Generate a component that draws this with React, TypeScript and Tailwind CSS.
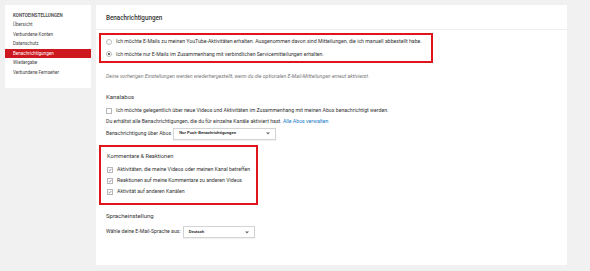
import React from "react";

const font = { fontFamily: "Roboto, 'Liberation Sans', sans-serif" };

const Radio = ({ checked }: { checked?: boolean }) => (
  <span className="w-[6px] h-[6px] rounded-full border border-[#bdbdbd] bg-white flex items-center justify-center shrink-0">
    {checked && <span className="w-[2px] h-[2px] rounded-full bg-[#333]" />}
  </span>
);

const Check = ({ checked }: { checked?: boolean }) => (
  <span className="w-[6px] h-[6px] border border-[#b8b8b8] bg-white flex items-center justify-center shrink-0">
    {checked && (
      <svg width="6" height="6" viewBox="0 0 6 6">
        <path d="M1 3.2 L2.4 4.5 L5 1.2" fill="none" stroke="#3b5478" strokeWidth="0.9" />
      </svg>
    )}
  </span>
);

const Select = ({ label, w }: { label: string; w: string }) => (
  <div className={`${w} h-[12px] border border-[#d3d3d3] bg-white flex items-center justify-between px-[5px] shadow-[0_1px_1px_rgba(0,0,0,0.05)]`}>
    <span className="text-[4.2px] font-bold text-[#333]">{label}</span>
    <svg width="4" height="3" viewBox="0 0 4 3">
      <path d="M0 0.5 L4 0.5 L2 2.5 Z" fill="#666" />
    </svg>
  </div>
);

const navItems = [
  "Übersicht",
  "Verbundene Konten",
  "Datenschutz",
  "Benachrichtigungen",
  "Wiedergabe",
  "Verbundene Fernseher",
];

export default function App() {
  return (
    <div style={font} className="w-[590px] h-[271px] bg-[#f1f1f1] flex items-start pt-[5px] pl-[5px] gap-[5px] text-[#333] overflow-hidden">
      <div className="w-[86px] h-[83px] bg-white pt-[6px] flex flex-col">
        <div className="h-[9px] pl-[8px] text-[4.5px] font-bold text-[#555] leading-[9px]">KONTOEINSTELLUNGEN</div>
        {navItems.map((item) => (
          <div
            key={item}
            className={`h-[9.6px] pl-[8px] text-[4.6px] leading-[9.6px] ${
              item === "Benachrichtigungen" ? "bg-[#cc181e] text-white" : "text-[#444]"
            }`}
          >
            {item}
          </div>
        ))}
      </div>

      <div className="w-[471px] h-[260px] bg-white flex flex-col">
        <div className="h-[25px] border-b border-[#efefef] flex items-center pl-[10px] pt-[3px] text-[6.3px] font-medium text-[#333]">
          Benachrichtigungen
        </div>

        <div className="pl-[3px] pt-[3px] flex flex-col text-[5.2px]">
          <div className="w-[334px] h-[30px] border-2 border-[#e0141b] pl-[5px] flex flex-col justify-center gap-[5px]">
            <div className="flex items-center gap-[4px]">
              <Radio />
              <span>Ich möchte E-Mails zu meinen YouTube-Aktivitäten erhalten. Ausgenommen davon sind Mitteilungen, die ich manuell abbestellt habe.</span>
            </div>
            <div className="flex items-center gap-[4px]">
              <Radio checked />
              <span>Ich möchte nur E-Mails im Zusammenhang mit verbindlichen Servicemitteilungen erhalten.</span>
            </div>
          </div>

          <div className="pl-[7px] h-[24px] pt-[3px] flex items-center italic text-[#767676]">
            Deine vorherigen Einstellungen werden wiederhergestellt, wenn du die optionalen E-Mail-Mitteilungen erneut aktivierst.
          </div>

          <div className="pl-[7px] h-[16px] pt-[3px] flex items-center text-[6px] text-[#333]">Kanalabos</div>

          <div className="pl-[7px] h-[13px] flex items-center gap-[4px] mt-[1px]">
            <Check />
            <span>Ich möchte gelegentlich über neue Videos und Aktivitäten im Zusammenhang mit meinen Abos benachrichtigt werden.</span>
          </div>
          <div className="pl-[7px] h-[10px] flex items-center">
            Du erhältst alle Benachrichtigungen, die du für einzelne Kanäle aktiviert hast.&nbsp;
            <span className="text-[#167ac6]">Alle Abos verwalten</span>
          </div>
          <div className="pl-[7px] h-[13px] flex items-center gap-[2px]">
            <span>Benachrichtigung über Abos</span>
            <Select label="Nur Push-Benachrichtigungen" w="w-[103px]" />
          </div>

          <div className="w-[159px] h-[60px] mt-[5px] border-2 border-[#e0141b] pl-[6px] pt-[5px] flex flex-col">
            <div className="h-[8px] flex items-center text-[5.6px]">Kommentare &amp; Reaktionen</div>
            <div className="flex flex-col mt-[4px]">
              {[
                "Aktivitäten, die meine Videos oder meinen Kanal betreffen",
                "Reaktionen auf meine Kommentare zu anderen Videos",
                "Aktivität auf anderen Kanälen",
              ].map((t) => (
                <div key={t} className="h-[11px] flex items-center gap-[4px]">
                  <Check checked />
                  <span>{t}</span>
                </div>
              ))}
            </div>
          </div>

          <div className="pl-[7px] h-[18px] mt-[1px] flex items-center text-[6px]">Spracheinstellung</div>
          <div className="pl-[7px] h-[14px] mt-[1px] flex items-center gap-[2px]">
            <span>Wähle deine E-Mail-Sprache aus:</span>
            <Select label="Deutsch" w="w-[72px]" />
          </div>
        </div>
      </div>
    </div>
  );
}
